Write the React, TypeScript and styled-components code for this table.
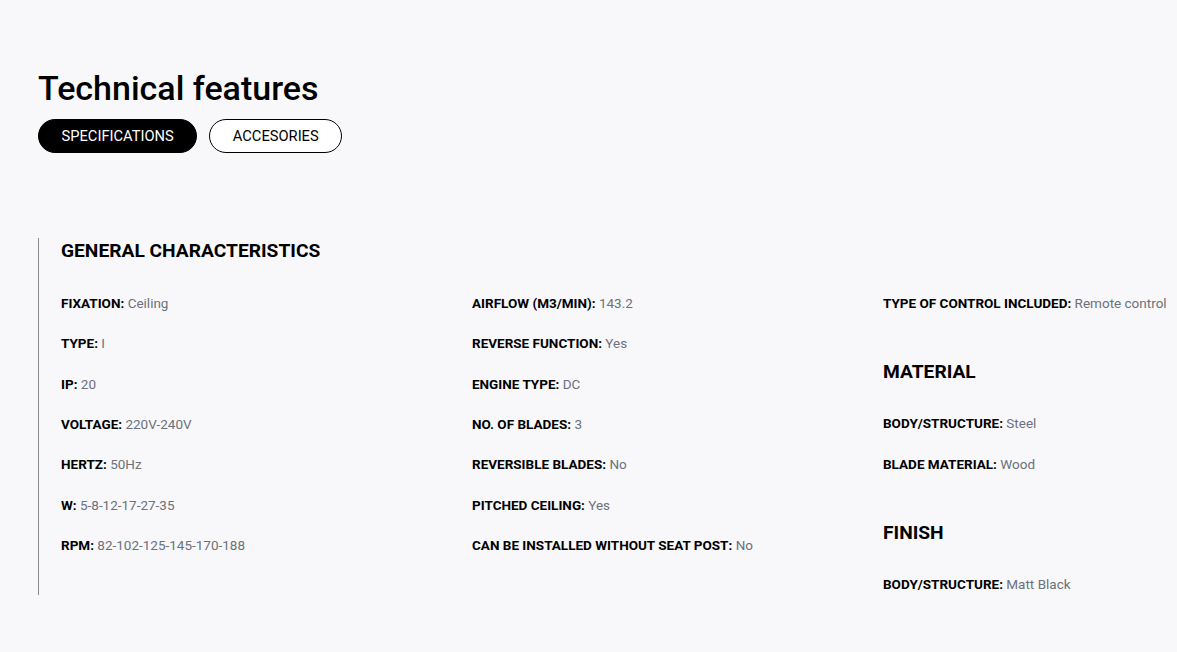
import React from "react";
import styled, { createGlobalStyle } from "styled-components";

const Global = createGlobalStyle`
  html, body { margin: 0; padding: 0; background: #f8f8fa; }
  body { font-family: Roboto, "Liberation Sans", sans-serif; color: #000; }
`;

const Page = styled.div`
  padding: 64px 0 40px 38px;
`;

const Title = styled.h1`
  margin: 0;
  font-size: 34px;
  font-weight: 500;
  line-height: 48px;
  color: #000;
`;

const Tabs = styled.div`
  display: flex;
  gap: 12px;
  margin-top: 7px;
`;

const Tab = styled.button<{ $active?: boolean }>`
  font-family: Roboto, "Liberation Sans", sans-serif;
  font-size: 14.7px;
  height: 34px;
  padding: 0 22.5px;
  border-radius: 17px;
  border: 1px solid #000;
  background: ${(p) => (p.$active ? "#000" : "#fff")};
  color: ${(p) => (p.$active ? "#fff" : "#000")};
  cursor: pointer;
`;

const Section = styled.section`
  margin-top: 85px;
  border-left: 1px solid #8a8a8a;
  padding-left: 22px;
  padding-bottom: 1px;
`;

const Heading = styled.h2<{ $spaced?: boolean }>`
  margin: ${(p) => (p.$spaced ? "26px 0 28px" : "2px 0 29px")};
  font-size: 19.2px;
  font-weight: 700;
  line-height: 26px;
  color: #000;
`;

const Columns = styled.div`
  display: grid;
  grid-template-columns: 411px 411px 1fr;
`;

const Column = styled.div`
  display: flex;
  flex-direction: column;
`;

const Row = styled.div`
  font-size: 13.5px;
  line-height: 20.33px;
  margin-bottom: 20px;
  white-space: nowrap;
  &:last-child { margin-bottom: 0; }
`;

const Label = styled.span`
  font-weight: 700;
  color: #000;
`;

const Value = styled.span`
  color: #6c717b;
`;

type Item = [string, string];

const col1: Item[] = [
  ["FIXATION", "Ceiling"],
  ["TYPE", "I"],
  ["IP", "20"],
  ["VOLTAGE", "220V-240V"],
  ["HERTZ", "50Hz"],
  ["W", "5-8-12-17-27-35"],
  ["RPM", "82-102-125-145-170-188"],
];

const col2: Item[] = [
  ["AIRFLOW (M3/MIN)", "143.2"],
  ["REVERSE FUNCTION", "Yes"],
  ["ENGINE TYPE", "DC"],
  ["NO. OF BLADES", "3"],
  ["REVERSIBLE BLADES", "No"],
  ["PITCHED CEILING", "Yes"],
  ["CAN BE INSTALLED WITHOUT SEAT POST", "No"],
];

const Spec = ({ item }: { item: Item }) => (
  <Row>
    <Label>{item[0]}:</Label> <Value>{item[1]}</Value>
  </Row>
);

export default function App() {
  return (
    <>
      <Global />
      <Page>
        <Title>Technical features</Title>
        <Tabs>
          <Tab $active>SPECIFICATIONS</Tab>
          <Tab>ACCESORIES</Tab>
        </Tabs>
        <Section>
          <Heading>GENERAL CHARACTERISTICS</Heading>
          <Columns>
            <Column>
              {col1.map((it) => (
                <Spec key={it[0]} item={it} />
              ))}
            </Column>
            <Column>
              {col2.map((it) => (
                <Spec key={it[0]} item={it} />
              ))}
            </Column>
            <Column>
              <Spec item={["TYPE OF CONTROL INCLUDED", "Remote control"]} />
              <Heading $spaced>MATERIAL</Heading>
              <Spec item={["BODY/STRUCTURE", "Steel"]} />
              <Spec item={["BLADE MATERIAL", "Wood"]} />
              <Heading $spaced>FINISH</Heading>
              <Spec item={["BODY/STRUCTURE", "Matt Black"]} />
            </Column>
          </Columns>
        </Section>
      </Page>
    </>
  );
}
